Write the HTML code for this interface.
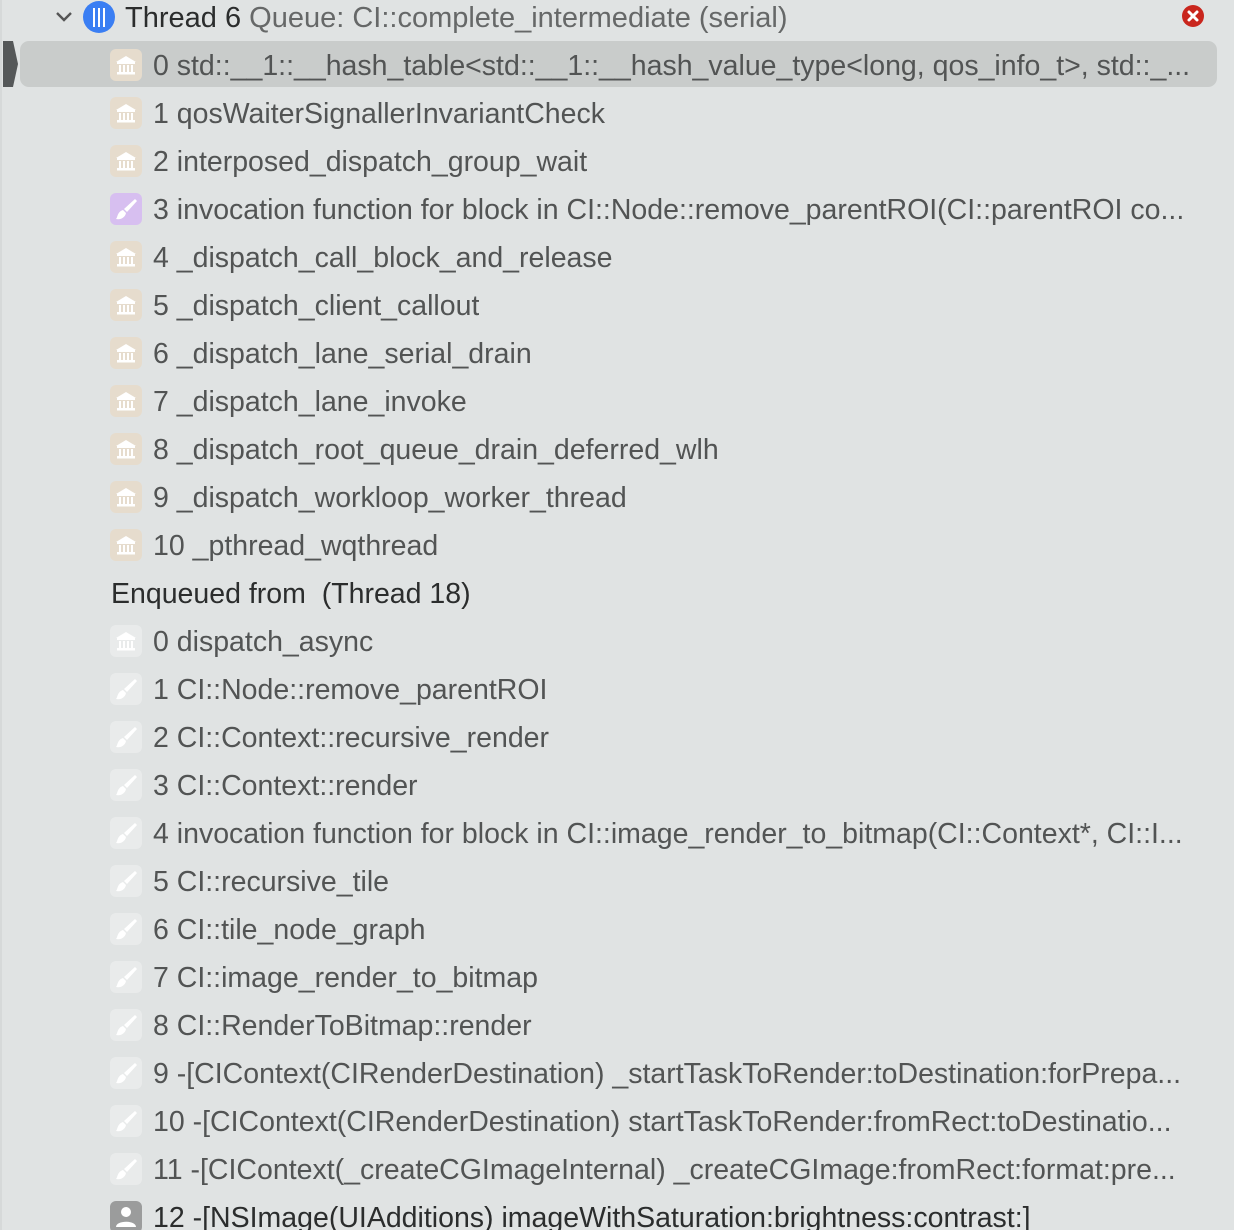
<!DOCTYPE html>
<html><head><meta charset="utf-8"><style>
html,body{margin:0;padding:0;width:1234px;height:1230px;overflow:hidden;}
body{background:#e0e3e3;position:relative;font-family:"Liberation Sans",Arial,sans-serif;}
.edge{position:absolute;left:0;top:0;width:2px;height:1230px;background:#d6d9d9;}
.row{position:absolute;left:0;width:1234px;height:48px;}
.ic{position:absolute;left:110px;top:8px;width:32px;height:32px;border-radius:6px;}
.t{position:absolute;left:153px;top:1px;line-height:48px;font-size:28.5px;color:#525454;white-space:nowrap;max-width:1060px;overflow:hidden;}
.bank{background:#e6dccd;}
.brush{background:#d7bff0;}
.gray{background:#e9ebeb;}
.person{background:#9b9c9c;}
.ic svg{position:absolute;left:0;top:0;}
</style></head><body>
<div class="edge"></div>
<svg style="position:absolute;left:54px;top:8px" width="20" height="18"><path d="M3 5 L10 12 L17 5" stroke="#555" stroke-width="2.4" fill="none"/></svg>
<div style="position:absolute;left:83px;top:1px;width:32px;height:32px;border-radius:50%;background:#3a7ef3;"></div>
<div style="position:absolute;left:93px;top:8px;width:2px;height:19px;background:#fff"></div>
<div style="position:absolute;left:98px;top:8px;width:2px;height:19px;background:#fff"></div>
<div style="position:absolute;left:103px;top:8px;width:2px;height:19px;background:#fff"></div>
<div style="position:absolute;left:125px;top:-6px;line-height:48px;font-size:29px;color:#2b2d2d;white-space:nowrap;">Thread 6 <span style="color:#666868">Queue: CI::complete_intermediate (serial)</span></div>
<div style="position:absolute;left:1182px;top:5px;width:22px;height:22px;border-radius:50%;background:#c9261d;"></div>
<svg style="position:absolute;left:1182px;top:5px" width="22" height="22"><path d="M7 7 L15 15 M15 7 L7 15" stroke="#fff" stroke-width="3" stroke-linecap="round"/></svg>
<div style="position:absolute;left:20px;top:41px;width:1197px;height:46px;border-radius:9px;background:#c9cccb;"></div>
<svg style="position:absolute;left:3px;top:41px" width="16" height="46"><path d="M0 0 H10 L15 23 L10 46 H0 Z" fill="#555859"/></svg>

<div id="rows"></div>
<script>
var bankSvg='<svg width="32" height="32"><path d="M16 7 L26 13 H6 Z" fill="#fff"/><rect x="7" y="13" width="18" height="2" fill="#fff"/><rect x="9" y="16" width="2" height="7" fill="#fff"/><rect x="13" y="16" width="2" height="7" fill="#fff"/><rect x="17" y="16" width="2" height="7" fill="#fff"/><rect x="21" y="16" width="2" height="7" fill="#fff"/><rect x="7" y="23" width="18" height="2.5" fill="#fff"/></svg>';
var brushSvg='<svg width="32" height="32"><path d="M25 6 L27 8 L17 19 L14 16 Z" fill="#fff"/><path d="M13 17 L16 20 C15 25 10 27 6 26 C8 24 7 19 13 17 Z" fill="#fff"/></svg>';
var personSvg='<svg width="32" height="32"><circle cx="16" cy="11" r="5" fill="#fff"/><path d="M6 26 C6 19 26 19 26 26 Z" fill="#fff"/></svg>';
var rows=[
['bank','0 std::__1::__hash_table&lt;std::__1::__hash_value_type&lt;long, qos_info_t&gt;, std::_...'],
['bank','1 qosWaiterSignallerInvariantCheck'],
['bank','2 interposed_dispatch_group_wait'],
['brush','3 invocation function for block in CI::Node::remove_parentROI(CI::parentROI co...'],
['bank','4 _dispatch_call_block_and_release'],
['bank','5 _dispatch_client_callout'],
['bank','6 _dispatch_lane_serial_drain'],
['bank','7 _dispatch_lane_invoke'],
['bank','8 _dispatch_root_queue_drain_deferred_wlh'],
['bank','9 _dispatch_workloop_worker_thread'],
['bank','10 _pthread_wqthread'],
['hdr','Enqueued from&nbsp;&nbsp;(Thread 18)'],
['gbank','0 dispatch_async'],
['gbrush','1 CI::Node::remove_parentROI'],
['gbrush','2 CI::Context::recursive_render'],
['gbrush','3 CI::Context::render'],
['gbrush','4 invocation function for block in CI::image_render_to_bitmap(CI::Context*, CI::I...'],
['gbrush','5 CI::recursive_tile'],
['gbrush','6 CI::tile_node_graph'],
['gbrush','7 CI::image_render_to_bitmap'],
['gbrush','8 CI::RenderToBitmap::render'],
['gbrush','9 -[CIContext(CIRenderDestination) _startTaskToRender:toDestination:forPrepa...'],
['gbrush','10 -[CIContext(CIRenderDestination) startTaskToRender:fromRect:toDestinatio...'],
['gbrush','11 -[CIContext(_createCGImageInternal) _createCGImage:fromRect:format:pre...'],
['person','12 -[NSImage(UIAdditions) imageWithSaturation:brightness:contrast:]']
];
var h='';
rows.forEach(function(r,i){
  var top=41+48*i;
  if(r[0]=='hdr'){h+='<div class="row" style="top:'+top+'px"><div class="t" style="left:111px;color:#2b2d2d">'+r[1]+'</div></div>';return;}
  var cls,svg;
  if(r[0]=='bank'){cls='bank';svg=bankSvg;}
  else if(r[0]=='brush'){cls='brush';svg=brushSvg;}
  else if(r[0]=='gbank'){cls='gray';svg=bankSvg;}
  else if(r[0]=='gbrush'){cls='gray';svg=brushSvg;}
  else {cls='person';svg=personSvg;}
  var col=(r[0]=='person')?'#2b2d2d':'#525454';
  h+='<div class="row" style="top:'+top+'px"><div class="ic '+cls+'">'+svg+'</div><div class="t" style="color:'+col+'">'+r[1]+'</div></div>';
});
document.getElementById('rows').innerHTML=h;
</script>
</body></html>
